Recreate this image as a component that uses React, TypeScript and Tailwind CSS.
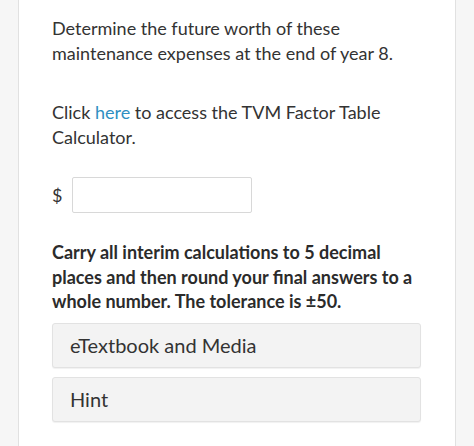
export default function App() {
  return (
    <div className="h-[446px] w-[474px] overflow-hidden bg-[#f6f6f6] font-['Lato',sans-serif] text-[#333333]">
      <div className="ml-[18px] h-full w-[438px] border-x border-[#e1e1e1] bg-white pl-[33px] pr-[34px] pt-[16px]">
        {/* Question text */}
        <p className="text-[18px] leading-[25px]">
          Determine the future worth of these maintenance expenses at the end of year 8.
        </p>
        <p className="mt-[34px] text-[18px] leading-[25px]">
          <span>Click </span>
          <a href="#" className="text-[#2f8fc2]">here</a>
          <span> to access the TVM Factor Table</span>
          <br />
          <span>Calculator.</span>
        </p>

        {/* Answer input */}
        <div className="mt-[27px] flex items-center gap-[10px]">
          <span className="w-[10px] text-[18px]">$</span>
          <div className="h-[36px] w-[180px] rounded-[2px] border border-[#d8d8d8] bg-white" />
        </div>

        <p className="mt-[27px] text-[18px] font-bold leading-[24.5px] text-[#2b2b2b]">
          Carry all interim calculations to 5 decimal places and then round your final answers to a
          whole number. The tolerance is ±50.
        </p>

        {/* Resource buttons */}
        <div className="mt-[9px] flex flex-col gap-[9px]">
          {["eTextbook and Media", "Hint"].map((label) => (
            <div
              key={label}
              className="flex h-[45px] items-center rounded-[3px] border border-[#e2e2e2] bg-[#f3f3f3] pl-[17px] text-[20px] shadow-[0_1px_1px_rgba(0,0,0,0.06)]"
            >
              {label}
            </div>
          ))}
        </div>
      </div>
    </div>
  );
}
